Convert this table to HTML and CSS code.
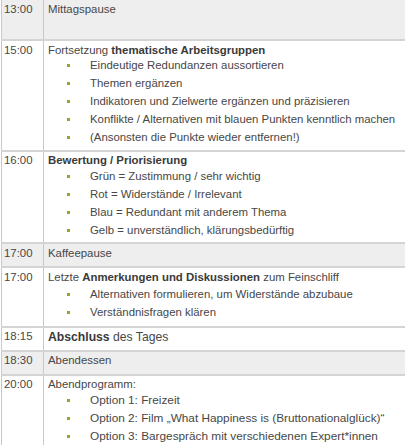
FILE: index.html
```html
<!DOCTYPE html>
<html>
<head>
<meta charset="utf-8">
<link rel="stylesheet" href="styles.css">
</head>
<body>
<table class="agenda">
  <tr class="gray first">
    <td class="time">13:00</td>
    <td class="desc">Mittagspause</td>
  </tr>
  <tr class="list">
    <td class="time">15:00</td>
    <td class="desc">Fortsetzung <b>thematische Arbeitsgruppen</b>
      <ul>
        <li>Eindeutige Redundanzen aussortieren</li>
        <li>Themen ergänzen</li>
        <li>Indikatoren und Zielwerte ergänzen und präzisieren</li>
        <li>Konflikte / Alternativen mit blauen Punkten kenntlich machen</li>
        <li>(Ansonsten die Punkte wieder entfernen!)</li>
      </ul>
    </td>
  </tr>
  <tr class="list">
    <td class="time">16:00</td>
    <td class="desc"><b>Bewertung / Priorisierung</b>
      <ul>
        <li>Grün = Zustimmung / sehr wichtig</li>
        <li>Rot = Widerstände / Irrelevant</li>
        <li>Blau = Redundant mit anderem Thema</li>
        <li>Gelb = unverständlich, klärungsbedürftig</li>
      </ul>
    </td>
  </tr>
  <tr class="gray">
    <td class="time">17:00</td>
    <td class="desc">Kaffeepause</td>
  </tr>
  <tr class="list roomy">
    <td class="time">17:00</td>
    <td class="desc">Letzte <b>Anmerkungen und Diskussionen</b> zum Feinschliff
      <ul class="loose">
        <li>Alternativen formulieren, um Widerstände abzubaue</li>
        <li>Verständnisfragen klären</li>
      </ul>
    </td>
  </tr>
  <tr>
    <td class="time">18:15</td>
    <td class="desc big"><b>Abschluss</b> des Tages</td>
  </tr>
  <tr class="gray">
    <td class="time">18:30</td>
    <td class="desc">Abendessen</td>
  </tr>
  <tr class="list">
    <td class="time">20:00</td>
    <td class="desc">Abendprogramm:
      <ul class="bigl">
        <li>Option 1: Freizeit</li>
        <li>Option 2: Film „What Happiness is (Bruttonationalglück)“</li>
        <li>Option 3: Bargespräch mit verschiedenen Expert*innen</li>
      </ul>
    </td>
  </tr>
</table>
</body>
</html>
```
FILE: styles.css
```css
html, body {
  margin: 0;
  padding: 0;
  background: #fff;
}
body {
  font-family: "Liberation Sans", Arial, sans-serif;
  font-size: 11.4px;
  color: #474747;
  overflow: hidden;
}
.agenda {
  border-collapse: collapse;
  margin-left: 1px;
  width: 420px;
  border-left: 1px solid #c8c8c8;
}
.agenda td {
  vertical-align: top;
  line-height: 15px;
  padding: 1.5px 4px 5.5px 4px;
  border-top: 2px solid #d4d4d4;
}
.agenda tr.list td {
  padding-bottom: 3.5px;
}
.agenda tr.roomy td {
  padding-bottom: 4.5px;
}
.agenda td.time {
  width: 35px;
  padding-left: 2px;
  padding-right: 4px;
  border-right: 1px solid #c8c8c8;
}
.agenda td.desc {
  padding-left: 4px;
}
.gray td {
  background: #eeeeee;
}
.agenda tr.first td {
  height: 33px;
  padding-bottom: 4.5px;
  border-top: none;
}
b {
  font-weight: bold;
  color: #3a3a3a;
}
ul {
  margin: -1.5px 0 0 0;
  padding: 0 0 0 42px;
  list-style: none;
}
ul.loose {
  margin-top: 0.5px;
}
li {
  position: relative;
  line-height: 18px;
}
li::before {
  content: "";
  position: absolute;
  left: -23px;
  top: 8px;
  width: 3px;
  height: 3px;
  background: #9ea12e;
}
.big {
  font-size: 12.2px;
}
.agenda td.big {
  line-height: 17px;
  padding-bottom: 3px;
}
.bigl li {
  font-size: 11.8px;
}
```
